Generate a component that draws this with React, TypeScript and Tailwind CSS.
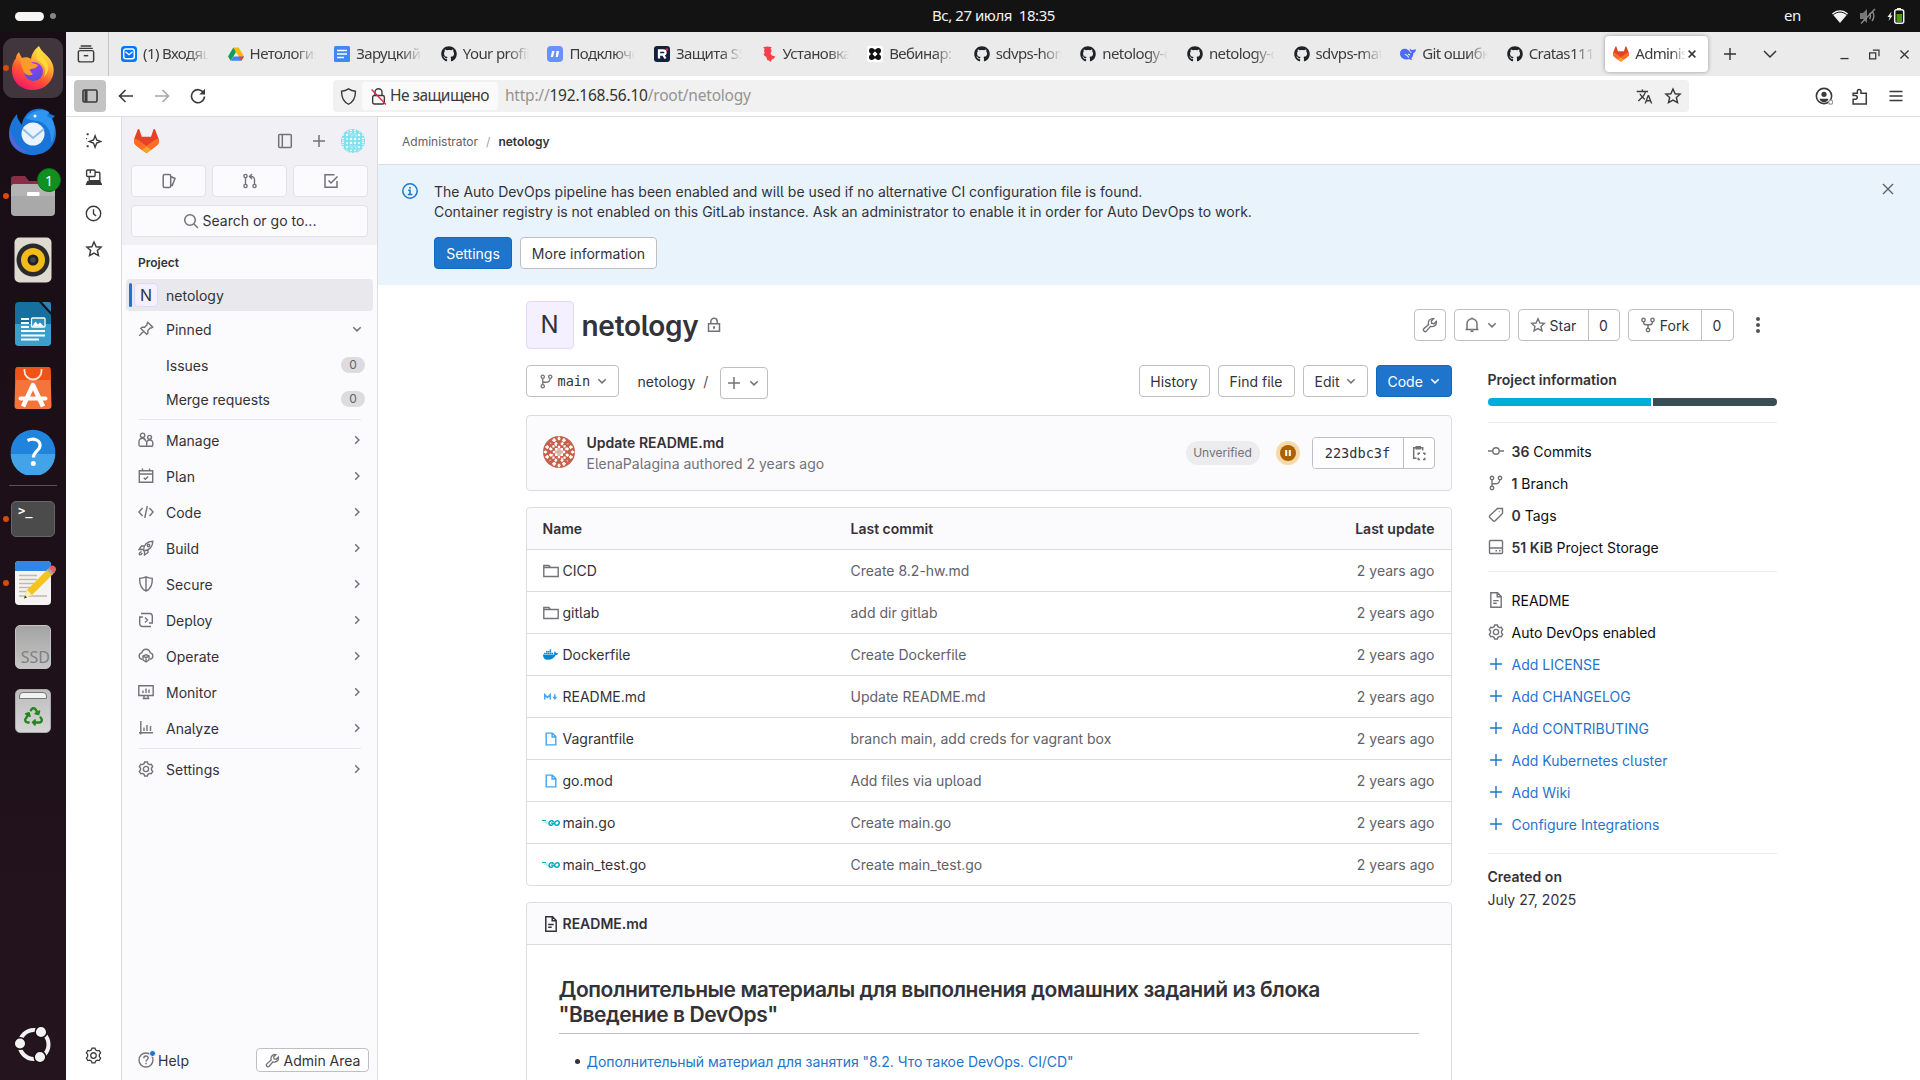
import React from 'react';
import { FaGithub, FaDocker, FaRecycle } from 'react-icons/fa6';
import { MdTranslate } from 'react-icons/md';
import { SiGo } from 'react-icons/si';

type Kids = { children?: React.ReactNode };

function Ico({ d, className = '', size = 16, w = 1.5, children }: Kids & { d?: string; className?: string; size?: number; w?: number }) {
  return (
    <svg width={size} height={size} viewBox="0 0 16 16" fill="none" stroke="currentColor" strokeWidth={w} className={'shrink-0 ' + className}>
      {d && <path d={d} />}
      {children}
    </svg>
  );
}

const P = {
  down: 'M4.300 6.200 8 9.900l3.700-3.700',
  right: 'M6.200 4.300 9.900 8 6.200 11.700',
  plus: 'M8 2v12M2 8h12',
  close: 'M3.5 3.5l9 9M12.5 3.5l-9 9',
  wrench: 'M1.9 11.6 6.6 7.5C5.6 4.4 7.9 1 11.6 1.7L9.3 4l.4 2.3 2.3.4 2.3-2.3c.7 3.700-2.700 6-5.800 5L4.400 14.100a1.770 1.770 0 0 1-2.500-2.500Z',
  branch: 'M4 5v6M4.200 8.800h3.300c2.500 0 4-1 4.200-3.500M4 1.250a1.750 1.750 0 1 0 0 3.500 1.750 1.750 0 0 0 0-3.500ZM4 11.250a1.750 1.750 0 1 0 0 3.500 1.750 1.750 0 0 0 0-3.500ZM12 1.250a1.750 1.750 0 1 0 0 3.500 1.750 1.750 0 0 0 0-3.500Z',
  star: 'M8 1.800 9.900 6l4.400.4-3.300 3 1 4.500L8 11.600l-4 2.300 1-4.500-3.300-3L6.100 6Z',
  gear: 'M6.600 1h2.800l.5 1.700 1.600.9 1.800-.4 1.400 2.400L13.500 7v2l1.200 1.400-1.400 2.400-1.800-.4-1.600.9-.5 1.700H6.600l-.5-1.700-1.600-.9-1.800.4L1.300 10.400 2.500 9V7L1.300 5.600l1.400-2.400 1.800.4 1.600-.9ZM8 5.400a2.600 2.600 0 1 0 0 5.200 2.600 2.600 0 0 0 0-5.200Z',
  doc: 'M3 .8h6.500L13.200 4.500V15.200H2.800V.8ZM9.200.8v4h4M5.200 8.600h5.500M5.200 11.300h3.500',
};

function Tanuki({ className }: { className: string }) {
  return (
    <svg viewBox="0 0 25 24" className={className}>
      <path d="m24.500 9.500-.03-.09L21.080.560a.900.900 0 0 0-1.720.1l-2.300 7.040H7.750L5.450.66a.9.9 0 0 0-1.720-.1L.340 9.410l-.030.090a6.300 6.300 0 0 0 2.090 7.280l5.190 3.890 2.560 1.940 1.560 1.180c.380.290.900.290 1.270 0l1.560-1.180 2.560-1.940 5.220-3.910a6.300 6.300 0 0 0 2.180-7.260Z" fill="#E24329" />
      <path d="m24.500 9.500-.030-.090a11.440 11.440 0 0 0-4.560 2.050l-7.450 5.630 4.740 3.580 5.220-3.910a6.300 6.300 0 0 0 2.080-7.260Z" fill="#FC6D26" />
      <path d="m7.700 20.680 2.560 1.940 1.560 1.180c.380.290.900.290 1.270 0l1.560-1.180 2.560-1.940-4.750-3.590Z" fill="#FCA326" />
      <path d="M5 11.460A11.400 11.400 0 0 0 .440 9.410L.400 9.500a6.300 6.300 0 0 0 2.090 7.280l5.210 3.900 4.750-3.590Z" fill="#FC6D26" />
    </svg>
  );
}

function Identicon({ color, size, id }: { color: string; size: number; id: string }) {
  const cells: React.ReactNode[] = [];
  for (let r = 0; r < 6; r++)
    for (let c = 0; c < 6; c++) {
      const rr = Math.min(r, 5 - r);
      const cc = Math.min(c, 5 - c);
      const x = c * 6;
      const y = r * 6;
      const k = rr * 3 + cc;
      if (k % 4 === 0) cells.push(<path key={x + '-' + y} d={`M${x + 3} ${y + 0.7}l2.300 2.300-2.300 2.300-2.300-2.300Z`} />);
      else if (k % 4 === 1) cells.push(<path key={x + '-' + y} d={`M${x + 1} ${y + 1}h1.500v1.500h-1.500ZM${x + 3.5} ${y + 3.5}h1.700v1.700h-1.700ZM${x + 3.5} ${y + 1}l1.500 0 0 1.500Z`} />);
      else if (k % 4 === 2) cells.push(<path key={x + '-' + y} d={`M${x + 1} ${y + 3}l2-2.500 2 2.500ZM${x + 1} ${y + 5.6}l2-2 2 2Z`} />);
      else cells.push(<path key={x + '-' + y} d={`M${x + 1.7} ${y + 1.7}h2.600v2.600h-2.600Z`} />);
    }
  return (
    <svg width={size} height={size} viewBox="0 0 36 36" className="shrink-0">
      <clipPath id={id}><circle cx="18" cy="18" r="18" /></clipPath>
      <g clipPath={`url(#${id})`}>
        <rect width="36" height="36" fill={color} />
        <g fill="#fff">{cells}</g>
      </g>
    </svg>
  );
}

function AuthorAvatar() {
  const edge = 'M12.500 2l2.500 3-2.500 2-2.500-2ZM18 0l2 3-2 2-2-2ZM23.500 2l2.500 3-2.500 2-2.500-2ZM14.500 6.500l2 2-2 2.500-2-2ZM21.500 6.500l2 2-2 2.500-2-2Z';
  return (
    <svg width="32" height="32" viewBox="0 0 36 36" className="shrink-0">
      <clipPath id="av-author"><circle cx="18" cy="18" r="18" /></clipPath>
      <g clipPath="url(#av-author)">
        <rect width="36" height="36" fill="#c5604c" />
        <g fill="#fff">
          {[0, 90, 180, 270].map((a) => (
            <g key={a} transform={`rotate(${a} 18 18)`}>
              <path d={edge} />
              <path d="M10.500 10.500h2.500v2.500h-2.500ZM13.500 13.500h3v3h-3ZM16.700 11h2.600v2.600h-2.600ZM14 10h1.500v1.500h-1.500ZM7.500 7.500l1.800 0 0 1.800Z" />
            </g>
          ))}
          <path d="M17.400 13v10h1.200V13ZM13 17.400h10v1.200H13Z" />
        </g>
      </g>
    </svg>
  );
}

/* ---------- Desktop ---------- */

function TopBar() {
  return (
    <div className="flex h-8 shrink-0 items-center bg-[#131313] text-[#f2f2f2]">
      <div className="flex w-[924px] items-center pl-[15px]">
        <div className="h-[9px] w-[29px] rounded-full bg-[#f6f5f4]" />
        <div className="ml-1.5 h-1.5 w-1.5 rounded-full bg-[#848484]" />
      </div>
      <div className="-mt-px w-[140px] whitespace-pre pl-2 text-[15px] tracking-[-0.450px]">Вс, 27 июля  18:35</div>
      <div className="ml-auto flex items-center pr-[15px]">
        <span className="-mt-px mr-[31px] text-[15px] tracking-[-0.400px]">en</span>
        <svg width="16" height="16" viewBox="0 0 16 16" className="mr-3"><path d="M0 5.500C4.500 1 11.500 1 16 5.500L8 15Z" fill="#f2f2f2" /><path d="M1.200 6.800c4-3.600 9.600-3.600 13.600 0" stroke="#131313" strokeWidth="1" fill="none" /></svg>
        <svg width="16" height="16" viewBox="0 0 16 16" className="mr-[11px]" fill="none" stroke="#8a8a8a" strokeWidth="1.400"><path d="M0 5h3l4-4v14l-4-4H0Z" fill="#777" stroke="none" /><path d="M9.500 5c1.300 2 1.300 4 0 6M12 3c2.300 3 2.300 7 0 10M1 15.500 15 1" /></svg>
        <svg width="18" height="18" viewBox="0 0 18 16"><path d="M4.500 3.500.5 9h2.200L1.500 13l4-5.500H3.500Z" fill="#f2f2f2" /><rect x="7.700" y="1.800" width="9" height="13.400" rx="2" fill="#131313" stroke="#f2f2f2" strokeWidth="1.500" /><rect x="10" y="0" width="4" height="2" fill="#f2f2f2" /><rect x="9.500" y="6" width="5.500" height="8" fill="#4e9a06" /></svg>
      </div>
    </div>
  );
}

function DockSlot({ children, dot, active }: Kids & { dot?: boolean; active?: boolean }) {
  return (
    <div className="relative flex h-16 shrink-0 items-center justify-center">
      {active && <div className="absolute inset-y-0.5 left-[3px] right-[3px] rounded-[11px] bg-[#40363c]" />}
      {dot && <div className="absolute left-[3px] top-[29px] h-1.5 w-1.5 rounded-full bg-[#d9480f]" />}
      <div className="relative">{children}</div>
    </div>
  );
}

function Dock() {
  return (
    <div className="flex w-[66px] shrink-0 flex-col bg-linear-to-b from-[#190d15] via-[#1d1018] to-[#24141e] pt-1">
      <DockSlot dot active>
        <svg width="44" height="46" viewBox="0 0 44 46">
          <defs>
            <linearGradient id="ff" x1=".8" y1="0" x2=".3" y2="1"><stop offset="0" stopColor="#fff44f" /><stop offset=".35" stopColor="#ffb02e" /><stop offset=".65" stopColor="#ff5634" /><stop offset="1" stopColor="#f5156c" /></linearGradient>
            <linearGradient id="ffp" x1="0" y1="0" x2=".3" y2="1"><stop offset="0" stopColor="#b03af0" /><stop offset="1" stopColor="#5a4de0" /></linearGradient>
          </defs>
          <path d="M28 1c2 5 7 8 10 12 5 6 6 13 3 20-3 7-10 12-19 12C10 45 1 37 1 25c0-6 2-9 4-12 0-2 1-4 3-6 1 3 2 4 3 6 3-1 6-1 9 1 1-6 4-10 8-13Z" fill="url(#ff)" />
          <circle cx="22.500" cy="26.500" r="9.500" fill="url(#ffp)" />
          <path d="M9 14c4-1 9 0 12 4 2 1 5 1 6 2-1 3-5 4-8 4 0 2 1 4 3 5-4 3-9 0-10-4-1-3-2-7-3-11Z" fill="#ff9a2e" />
          <path d="M28 3c0 7 7 10 9 17 1 4-1 9-4 12 4-9-2-15-7-17-1-4 0-9 2-12Z" fill="#ffd83a" />
        </svg>
      </DockSlot>
      <DockSlot>
        <svg width="50" height="48" viewBox="0 0 50 48">
          <path d="M9 6C4 12 1 18 1 26c0 12 10 21 24 21 13 0 23-9 23-22 0-5-2-10-4-14l3-3-5-2C38-1 24-1 18 7c-3 4-4 7-4 10-2-3-5-6-5-11Z" fill="#1975d8" />
          <path d="M18 10c5-7 15-10 23-6l-2 4 5 3c4 7 3 18-1 24 1-12-5-21-14-22-4-1-8-1-11-3Z" fill="#2e96f0" />
          <path d="M3 18c-1 11 5 21 17 26-6 1-16-4-18-14Z" fill="#5a62d8" />
          <circle cx="25" cy="26" r="11.500" fill="#eaf3ff" />
          <path d="m15 21 10 9 11-9" fill="none" stroke="#8fbbe8" strokeWidth="2" />
          <circle cx="27" cy="8" r="1.500" fill="#fff" />
        </svg>
      </DockSlot>
      <DockSlot dot>
        <svg width="46" height="42" viewBox="0 0 46 42">
          <path d="M1 4a3 3 0 0 1 3-3h11l4 5h22a3 3 0 0 1 3 3v12H1Z" fill="#8a2d46" />
          <rect x="1" y="9" width="44" height="32" rx="4" fill="#a9a9a9" />
          <path d="M5 9h36a4 4 0 0 1 4 4v8H1v-8a4 4 0 0 1 4-4Z" fill="#b4b4b4" />
          <rect x="17" y="17" width="12.500" height="4" rx="1" fill="#fff" />
        </svg>
        <div className="absolute -top-[7px] left-[27px] flex h-6 w-6 items-center justify-center rounded-full border border-[#0d6b1c] bg-[#12901f] text-[14px] text-white">1</div>
      </DockSlot>
      <DockSlot>
        <svg width="38" height="46" viewBox="0 0 38 46">
          <rect x="0.500" y="0.500" width="37" height="45" rx="5" fill="#e0dbd0" />
          <circle cx="19" cy="23" r="16.500" fill="#2a2a2c" /><circle cx="19" cy="23" r="12" fill="#f2bb1a" /><circle cx="19" cy="23" r="5.500" fill="#1f1f22" /><circle cx="19" cy="23" r="2.800" fill="#45454a" />
        </svg>
      </DockSlot>
      <DockSlot>
        <svg width="38" height="46" viewBox="0 0 38 46">
          <path d="M5 1h20l12 13v27a4 4 0 0 1-4 4H5a4 4 0 0 1-4-4V5a4 4 0 0 1 4-4Z" fill="#16709f" />
          <path d="M1 23h36v18a4 4 0 0 1-4 4H5a4 4 0 0 1-4-4Z" fill="#3b9fcb" />
          <path d="M28 1h7a2 2 0 0 1 2 2v8Z" fill="#2b86b2" />
          <path d="M7 18h8M7 22h8M7 26h8M7 30h24M7 34.500h24M7 38.500h18" stroke="#fff" strokeWidth="2" />
          <rect x="17.500" y="17" width="13.500" height="9" rx="1" fill="#2e8fbd" stroke="#fff" strokeWidth="1.300" /><path d="m18 25.500 3.500-5 2.500 3 2-2 4 4Z" fill="#fff" />
        </svg>
      </DockSlot>
      <DockSlot>
        <svg width="38" height="44" viewBox="0 0 38 44">
          <path d="M4 1h30a2.500 2.500 0 0 1 2.500 2.500L37.500 40a3 3 0 0 1-3 3h-31a3 3 0 0 1-3-3L1.500 3.500A2.500 2.500 0 0 1 4 1Z" fill="#f4743b" />
          <path d="M4 1h30a2.500 2.500 0 0 1 2.500 2.500L37 14H1L1.500 3.500A2.500 2.500 0 0 1 4 1Z" fill="#ef5316" />
          <path d="M10.500 3v2a8.500 8.500 0 0 0 17 0V3" fill="none" stroke="#fbe3d8" strokeWidth="1.800" />
          <path d="M9 40.500 19 19l10 21.500" fill="none" stroke="#fff" strokeWidth="4.500" strokeLinejoin="round" /><path d="M6.500 32.500h25" stroke="#fff" strokeWidth="4" strokeLinecap="round" />
        </svg>
      </DockSlot>
      <DockSlot>
        <svg width="46" height="46" viewBox="0 0 46 46" className="-mt-px">
          <circle cx="23" cy="23" r="22.300" fill="#2084dc" /><path d="M.7 25a22.300 22.300 0 0 0 44.600 0Z" fill="#43a3e8" />
          <path d="M17.500 11.500c6-3 13-.5 12.500 5.500-.4 5-6.500 5-6.500 11.500" fill="none" stroke="#fff" strokeWidth="3.200" /><circle cx="23.300" cy="34.500" r="2.500" fill="#fff" />
        </svg>
      </DockSlot>
      <div className="mx-[9px] mb-px mt-[1px] h-px shrink-0 bg-[#5a5157]" />
      <DockSlot dot>
        <div className="h-9 w-11 rounded-[5px] border border-[#666] bg-[#4b4b4b] pl-1.5 pt-0.5 font-['DejaVu_Sans_Mono'] text-[12px] font-bold leading-[14px] text-white">&gt;_</div>
      </DockSlot>
      <DockSlot dot>
        <svg width="46" height="46" viewBox="-4 0 46 46">
          <rect x="1" y="1" width="36" height="44" rx="4" fill="#f4f3f1" /><path d="M5 1h28a4 4 0 0 1 4 4v6H1V5a4 4 0 0 1 4-4Z" fill="#3584e4" />
          <path d="M5 15.500h18M5 19.500h18M5 23.500h18M5 27.500h14M5 31.500h9M5 36h28" stroke="#c0bba8" strokeWidth="1.500" />
          <path d="M10 38.500 13 30 34 9l5 5-21 21Z" fill="#f6c21c" /><path d="M10 38.500 13 30l5 5Z" fill="#fbeebb" /><path d="m33 10 3-3 5 5-3 3Z" fill="#a9a4a4" /><path d="m35 8 1.500-2c3-2 7 2 5 5l-1.500 2Z" fill="#ed5b64" /><path d="m10 38.500 1-3 2 2Z" fill="#333" />
        </svg>
      </DockSlot>
      <DockSlot>
        <div className="flex h-11 w-9 items-end justify-end rounded-[5px] border border-[#c4c4c4] bg-linear-to-b from-[#a3a3a3] to-[#c6c6c6] font-['Noto_Sans'] text-[16px] leading-[22px] text-[#808080]">SSD</div>
      </DockSlot>
      <DockSlot>
        <div className="flex h-11 w-9 flex-col items-center rounded-[5px] border border-[#aaa] bg-linear-to-b from-[#bdbdbd] to-[#d6d6d6]">
          <div className="mt-0.5 h-[7px] w-7 rounded-t border border-[#777] bg-[#f2f2f2]" />
          <FaRecycle className="mt-2 h-[19px] w-[19px] text-[#26861f]" />
        </div>
      </DockSlot>
      <div className="mb-[17px] mt-auto flex justify-center">
        <svg width="38" height="38" viewBox="0 0 38 38">
          <circle cx="20" cy="19.500" r="14.500" fill="none" stroke="#f2f2f2" strokeWidth="4" />
          <g fill="#f2f2f2" stroke="#1e1218" strokeWidth="1.500"><circle cx="6" cy="18.500" r="5.800" /><circle cx="27" cy="7" r="5.800" /><circle cx="26" cy="32" r="5.800" /></g>
        </svg>
      </div>
    </div>
  );
}

/* ---------- Browser ---------- */

const GitHubIcon = () => <FaGithub className="h-4 w-4 text-[#1f2328]" />;

const tabs: { t: string; i: React.ReactNode }[] = [
  { t: '(1) Входящие', i: <svg viewBox="0 0 16 16" className="h-4 w-4"><rect width="16" height="16" rx="3.500" fill="#07f" /><rect x="2.700" y="3" width="10.600" height="9.800" rx="2.200" fill="none" stroke="#fff" strokeWidth="1.500" /><path d="m4.500 5.700 3.500 3 3.500-3" fill="none" stroke="#fff" strokeWidth="1.400" /></svg> },
  { t: 'Нетология', i: <svg viewBox="0 0 16 16" className="h-4 w-4"><path d="M5.300 1.500h5.400L16 10.500h-5.300Z" fill="#ffba00" /><path d="M5.300 1.500 8 6.100 2.700 14.800 0 10.500Z" fill="#0f9d58" /><path d="M5.400 10.500H16l-2.700 4.300H2.700Z" fill="#4285f4" /><path d="m10.700 10.500 5.300 0-2.700 4.300Z" fill="#ea4335" /></svg> },
  { t: 'Заруцкий', i: <svg viewBox="0 0 16 16" className="h-4 w-4"><rect width="16" height="16" rx="1.500" fill="#4285f4" /><path d="M3 4.500h10M3 8h10M3 11.500h7" stroke="#fff" strokeWidth="1.700" /></svg> },
  { t: 'Your profile', i: <GitHubIcon /> },
  { t: 'Подключение', i: <svg viewBox="0 0 16 16" className="h-4 w-4"><rect width="16" height="16" rx="4" fill="#6691ff" /><path d="M5 5h2.600L6 11H3.800ZM9.500 5h2.600l-1.200 6H8.800Z" fill="#fff" /></svg> },
  { t: 'Защита SSH', i: <svg viewBox="0 0 16 16" className="h-4 w-4"><rect width="16" height="16" rx="3" fill="#14213d" /><path d="M5 12.500V4.500h4.500a2 2 0 0 1 0 4H5m4 0 2.500 4" fill="none" stroke="#fff" strokeWidth="2.300" /><circle cx="13" cy="3.500" r="1.300" fill="#f0243c" /></svg> },
  { t: 'Установка', i: <svg viewBox="0 0 16 16" className="h-4 w-4"><path d="M2 1.500C5 .2 8 .5 11 1.200l-1.500 1C11 4 10.500 6 9.500 7.500L11 9.500l3 .8c0 1.500-1.500 3-3 3L9.500 16 8 14.500l-1.500-.3L5 10.500 3.500 10 2.500 7.500l1.500-.3-1-2 .5-2.500Z" fill="#f04248" /></svg> },
  { t: 'Вебинар: ', i: <svg viewBox="0 0 16 16" className="h-4 w-4"><rect width="16" height="16" rx="2" fill="#fff" /><g fill="none" stroke="#111" strokeWidth="2.200"><circle cx="4.700" cy="4.700" r="1.600" /><circle cx="11.300" cy="4.700" r="1.600" /><circle cx="4.700" cy="11.300" r="1.600" /><circle cx="11.300" cy="11.300" r="1.600" /><path d="M4.700 4.700h6.600v6.600H4.700Z" /></g></svg> },
  { t: 'sdvps-home', i: <GitHubIcon /> },
  { t: 'netology-de', i: <GitHubIcon /> },
  { t: 'netology-de', i: <GitHubIcon /> },
  { t: 'sdvps-mate', i: <GitHubIcon /> },
  { t: 'Git ошибка', i: <svg viewBox="0 0 16 16" className="h-4 w-4"><path d="M0 7.500C0 4 2.500 2.300 5.500 2.800 7.500 3 9 4.500 10.300 6.500c.5.300 1 .3 1.500 0-1.500-.7-2.300-2-2-4 1 1.200 2 1.700 3 1.500 1.200-.2 2.200-.8 3.200-.7-.2 2-.8 3.200-2.600 4-.1 2.500-.9 4-2.200 5.200.5.500 1 .8 1.500 1-1.500.8-3 0-3.700-.5C4.500 14.500 0 12 0 7.500Z" fill="#4d6bfe" /><path d="M4.800 8.200c2 .5 3 1.500 4 3.300M8 8l2 1.300" stroke="#ebebeb" strokeWidth="1.100" fill="none" /></svg> },
  { t: 'Cratas1113', i: <GitHubIcon /> },
];

function TabStrip() {
  return (
    <div className="flex h-11 shrink-0 items-center bg-[#ebebeb] text-[15px] text-[#3d3d3d]">
      <div className="flex h-full w-[43px] items-center justify-center border-r border-[#c2c2c2] pr-0.5">
        <Ico size={18} w={1.300} className="text-[#3a3a3a]"><path d="M3.300.8h9.400M2 3h12" /><rect x="1.200" y="5" width="13.600" height="10" rx="1.500" /><path d="M6 9.500h4" /></Ico>
      </div>
      <div className="flex pl-1">
        {tabs.map((t, i) => (
          <div key={i} className="flex w-[106.600px] items-center pl-2">
            <span className="shrink-0">{t.i}</span>
            <span className="-mt-px ml-1.5 w-[66px] overflow-hidden whitespace-nowrap tracking-[-0.600px] [mask-image:linear-gradient(to_right,black_68%,transparent)]">{t.t}</span>
          </div>
        ))}
        <div className="-my-[7px] flex h-9 w-[103px] items-center rounded bg-white pl-2 shadow-[0_0_4px_rgba(0,0,0,0.350)]">
          <Tanuki className="h-4 w-4 shrink-0" />
          <span className="-mt-px ml-1.5 w-[51px] overflow-hidden whitespace-nowrap tracking-[-0.700px] [mask-image:linear-gradient(to_right,black_72%,transparent)]">Administrator</span>
          <Ico size={12} w={1.900} d={P.close} className="text-[#333]" />
        </div>
      </div>
      <Ico size={16} w={1.400} d={P.plus} className="ml-[14px] text-[#333]" />
      <Ico size={16} w={1.500} d="M2 5l6 6 6-6" className="ml-6 text-[#333]" />
      <div className="ml-auto flex items-center gap-[17px] pr-[9px] text-[#333]">
        <Ico size={13} w={1.600} d="M3 13h10" />
        <Ico size={13} w={1.500}><path d="M2 6h7.500v7.500H2ZM6 2.500h7.500V10" /></Ico>
        <Ico size={13} w={1.600} d="M3 3l10 10M13 3L3 13" />
      </div>
    </div>
  );
}

function Toolbar() {
  return (
    <div className="flex h-[41px] shrink-0 items-start border-b border-[#dedede] bg-white pt-1 text-[#3a3a3a]">
      <div className="ml-2 flex h-8 w-8 items-center justify-center rounded bg-[#c4c4c4]">
        <Ico size={16} w={1.600}><rect x="1" y="2" width="14" height="12" rx="1.500" /><path d="M4 2v12" strokeWidth="3" /></Ico>
      </div>
      <div className="flex h-8 items-center">
        <Ico size={16} w={1.600} d="M15 8H1.500M7.500 2 1.500 8l6 6" className="ml-3" />
        <Ico size={16} w={1.600} d="M1 8h13.500M8.500 2l6 6-6 6" className="ml-5 text-[#a8a8a8]" />
        <Ico size={16} w={1.600} className="-mt-px ml-5"><path d="M13.700 5A6.500 6.500 0 1 0 14.500 8.500" /><path d="M15 .8v5.700H9.300Z" fill="currentColor" stroke="none" /></Ico>
      </div>
      <div className="ml-[127px] flex h-8 w-[1356px] items-center rounded bg-[#f1f1f1] text-[15.500px]">
        <Ico size={17} w={1.300} d="M8 .8c2 1.300 4 2 6.500 2.200C14.700 9 12.500 13 8 15.300 3.500 13 1.300 9 1.500 3 4 2.800 6 2.100 8 .8Z" className="ml-[7px]" />
        <div className="ml-[5px] flex h-7 w-[136px] items-center rounded bg-[#fafafa]">
          <Ico size={17} w={1.300} className="ml-2"><rect x="2.500" y="7" width="11" height="8" rx="1.500" /><path d="M4.700 7V4a3.300 3.300 0 0 1 6.600 0v3" /><path d="m1.500 1.500 13.500 14" stroke="#e8234f" /></Ico>
          <span className="ml-[3px] whitespace-nowrap tracking-[-0.550px]">Не защищено</span>
        </div>
        <span className="ml-[7px] whitespace-nowrap tracking-[-0.220px] text-[#949494]">http://<span className="text-[#333]">192.168.56.10</span>/root/netology</span>
        <MdTranslate className="ml-auto h-[17px] w-[17px]" />
        <Ico size={18} w={1.300} d={P.star} className="ml-[11px] mr-[7px]" />
      </div>
      <div className="ml-auto mr-4 flex h-8 items-center">
        <Ico size={18} w={1.400} className="mr-[18px]"><circle cx="8" cy="8" r="6.800" /><circle cx="8" cy="6.500" r="2.300" fill="currentColor" stroke="none" /><path d="M4 10.500h8c-.5 2-2 3-4 3s-3.500-1-4-3Z" fill="currentColor" stroke="none" /><circle cx="14" cy="13.500" r="1.800" stroke="#999" fill="#fff" strokeWidth="1" /></Ico>
        <Ico size={17} w={1.400} className="mr-5" d="M2 15V10.500h2.200a1.600 1.600 0 0 0 0-3.400H2V5h4V3a1.700 1.700 0 0 1 3.400 0v2h5V15Z" />
        <Ico size={16} w={1.400} d="M1.500 3.500h13M1.500 8h13M1.500 12.500h13" />
      </div>
    </div>
  );
}

function BrowserRail() {
  return (
    <div className="flex w-[55px] shrink-0 flex-col items-center gap-[19px] bg-white pt-4 text-[#3a3a3a]">
      <Ico size={17} w={1.300}><path d="M9.500 2.500 11 6.500l4 1.500-4 1.500-1.500 4L8 9.500 4 8l4-1.500Z" /><path d="M1.500 1.200h2M2.500.2v2M1.500 12.500h2M2.500 11.500v2M1 5.300h1" /></Ico>
      <Ico size={17} w={1.300}><rect x="1.500" y="1" width="8" height="6" rx="1" /><path d="M9.500 3H13a1 1 0 0 1 1 1v7H4V7" /><path d="M2.500 12h11.500l1.500 2.500h-14Z" fill="currentColor" /><path d="M5 1v3" /></Ico>
      <Ico size={17} w={1.300}><circle cx="8" cy="8" r="6.800" /><path d="M8 4v4.300l2.500 2" /></Ico>
      <Ico size={18} w={1.300} d={P.star} className="-mt-px" />
      <Ico size={17} w={1.200} d={P.gear} className="mb-4 mt-auto" />
    </div>
  );
}

/* ---------- GitLab ---------- */

const navIcons: Record<string, React.ReactNode> = {
  Manage: <><circle cx="4.600" cy="3.300" r="2.200" /><circle cx="11.600" cy="5.300" r="1.900" /><path d="M8 14.200H2.500a1.500 1.500 0 0 1-1.500-1.500V9.500a3.300 3.300 0 0 1 6.600 0M8.700 14.200h4.800a1.200 1.200 0 0 0 1.300-1.200v-2.200a2.800 2.800 0 0 0-3-2.800c-1.800 0-3.100 1.200-3.100 2.800v3.400Z" /></>,
  Plan: <><path d="M1.300 2.700h13.400v11.600H1.300ZM1.300 6h13.400M4.500.5v2.500M11.500.5v2.500M5.800 9.700l1.500 1.500 2.800-2.700" /></>,
  Code: <><path d="M4.500 4 .900 8l3.600 4M11.500 4l3.600 4-3.600 4M9.300 2 6.700 14" /></>,
  Build: <><path d="M5.500 10.500C5.500 5 9 1.200 14.800 1.200c0 5.500-3.500 9.300-9 9.500ZM6 6H3.500L1 9.500h4M10 10v2.500L6.500 15v-4M1.200 14.800c0-2 .8-3 2.500-3.200M1.200 14.800c1.500.2 2.500-.4 3-1.800" /><circle cx="10.500" cy="5.500" r="1.200" /></>,
  Secure: <path d="M8 .9c2 1 4 1.400 6.300 1.500C14.500 8.500 12.500 13 8 15 3.500 13 1.500 8.500 1.700 2.400 4 2.300 6 1.900 8 .9ZM8 1v14" />,
  Deploy: <path d="M3 1.500h8.500A2.800 2.800 0 0 1 14.300 4.300V11H11M13 14.500H4.500a2.800 2.800 0 0 1-2.800-2.800V5H5M7 5.500 9.500 8 7 10.500" />,
  Operate: <><path d="M4 11.200a3.200 3.200 0 0 1-.3-6.300C4.500 2.600 6 1.200 8 1.200s3.600 1.400 4.300 3.700a3.200 3.200 0 0 1-.3 6.300" /><path d="M8 6.700 11 8v4l-3 2-3-2V8ZM5.200 8.200 8 9.700l2.800-1.500M8 9.700V13.500" /></>,
  Monitor: <path d="M.8 1.800h14.400v9.700H.8ZM4.700 14.500h6.600M6 11.500v3M10 11.500v3M5 6.500V9M8 4.500V9M11 5.500V9" />,
  Analyze: <path d="M2.800 1v13.500M1 12.700h14M6 7.500V11M9 5V11M12.500 6V11" />,
  Settings: <path d={P.gear} />,
};

function NavRow({ name }: { name: string }) {
  return (
    <div className="flex h-9 items-center pl-4 pr-3">
      <Ico w={1.400} className="text-[#737278]">{navIcons[name]}</Ico>
      <span className="ml-3">{name}</span>
      <Ico d={P.right} className="ml-auto text-[#737278]" />
    </div>
  );
}

function Sidebar() {
  const btn = 'flex h-8 flex-1 items-center justify-center rounded border border-[#e3e2e7] bg-[#fbfafd]';
  return (
    <div className="flex w-[257px] shrink-0 flex-col border-x border-[#dcdcde] bg-[#fbfafd] text-[14px] text-[#333238]">
      <div className="h-32 shrink-0 bg-[#f1f0f4] text-[#737278]">
        <div className="flex h-12 items-center pl-3 pr-3">
          <Tanuki className="h-6 w-[25px]" />
          <Ico className="ml-auto"><rect x="1.700" y="1.500" width="12.600" height="13" rx="1" /><path d="M5.300 1.500v13" /></Ico>
          <Ico d={P.plus} className="ml-[18px] mr-[14px]" />
          <Identicon color="#7fe0ee" size={24} id="av-user" />
        </div>
        <div className="flex gap-1.5 px-[9px]">
          <div className={btn}><Ico><rect x="2.200" y="1.500" width="7.500" height="13" rx="1.500" /><path d="M9.700 3.500 14 5.500l-2.800 7-1.500-.5" /></Ico></div>
          <div className={btn}><Ico w={1.400}><circle cx="3.500" cy="3" r="1.600" /><circle cx="3.500" cy="13" r="1.600" /><circle cx="12.500" cy="13" r="1.600" /><path d="M3.500 4.600v6.800M12.500 11.400V6.500a3 3 0 0 0-3-3H8M10 1 7.500 3.500 10 6" /></Ico></div>
          <div className={btn}><Ico><path d="M14 8v6.200H2V1.800h9.500M5.500 7.500 8 10l6.500-6.500" /></Ico></div>
        </div>
        <div className="mx-[9px] mt-2 flex h-8 items-center justify-center rounded border border-[#e3e2e7] bg-[#fbfafd] pb-px text-[#333238]">
          <Ico className="mr-1 text-[#737278]"><circle cx="7" cy="7" r="5.300" /><path d="m11 11 4 4" /></Ico>Search or go to...
        </div>
      </div>
      <div className="flex h-[34px] shrink-0 items-center pl-4 pt-0.5 text-[12px] font-semibold">Project</div>
      <div className="mx-1 flex h-8 shrink-0 items-center rounded bg-[#e9e8ed] pl-[3px]">
        <div className="h-6 w-[3px] rounded-full bg-[#1f75cb]" />
        <div className="ml-[2px] flex h-6 w-6 items-center justify-center rounded border border-[#e1d8f9] bg-[#f4f0ff] text-[16px]">N</div>
        <span className="ml-[8px]">netology</span>
      </div>
      <div className="flex h-9 items-center pl-4 pr-3">
        <Ico w={1.400} className="text-[#737278]"><path d="M9.800 1.300 14.700 6.200l-1.500.8-1 0-2.400 2.500.2 2.500-1.300 1.300L2.800 7.400l1.300-1.300 2.500.2L9 3.900V2.600ZM5.700 10.300l-4.500 4.500" /></Ico>
        <span className="ml-3">Pinned</span>
        <Ico d={P.down} className="ml-auto text-[#737278]" />
      </div>
      {['Issues', 'Merge requests'].map((n) => (
        <div key={n} className="relative top-px flex h-[34px] items-center pl-11 pr-3">
          <span>{n}</span>
          <span className="ml-auto h-4 w-6 rounded-full bg-[#dcdcde] text-center text-[12px] leading-4 text-[#626168]">0</span>
        </div>
      ))}
      <div className="mx-4 mb-[2px] mt-1 h-px bg-[#e7e6ea]" />
      {['Manage', 'Plan', 'Code', 'Build', 'Secure', 'Deploy', 'Operate', 'Monitor', 'Analyze'].map((n) => <NavRow key={n} name={n} />)}
      <div className="mx-4 mb-[2px] mt-[2px] h-px bg-[#e7e6ea]" />
      <NavRow name="Settings" />
      <div className="mb-2 mt-auto flex h-6 items-center pl-4 pr-2">
        <div className="relative text-[#737278]">
          <Ico w={1.400}><circle cx="8" cy="8" r="7" /><path d="M5.800 6.300c0-3 4.400-3 4.400-.2C10.200 7.700 8 7.700 8 9.500M8 10.700v1.500" /></Ico>
          <div className="absolute -right-0.5 -top-0.5 h-[7px] w-[7px] rounded-full border border-[#fbfafd] bg-[#1f75cb]" />
        </div>
        <span className="ml-1">Help</span>
        <div className="ml-auto flex h-6 w-[113px] items-center justify-center rounded border border-[#bfbfc3] bg-white"><Ico d={P.wrench} w={1.400} size={15} className="mr-[4px] text-[#737278]" />Admin Area</div>
      </div>
    </div>
  );
}

function Btn({ children, className = '' }: Kids & { className?: string }) {
  return <div className={'flex h-8 shrink-0 items-center rounded border border-[#bfbfc3] bg-white ' + className}>{children}</div>;
}

const FileIcon = () => <Ico size={14} w={1.600} className="ml-px text-[#42a5f5]"><path d="M3.500 1.300h6l4 4v9.400H2.500V1.300ZM9.200 1.500v4.200h4" /></Ico>;
const FolderIcon = () => <Ico w={1.400} className="text-[#737278]"><path d="M.8 13.500V2.500h5l1.700 2h7.700v9ZM.8 4.500h7" /></Ico>;
const GoIcon = () => <span className="-ml-px flex w-[18px] items-center"><span className="-mr-0.5 -mt-1 h-[1.500px] w-1 shrink-0 bg-[#00acc1]" /><SiGo className="h-4 w-4 shrink-0 text-[#00acc1]" /></span>;

const files: [React.ReactNode, string, string][] = [
  [<FolderIcon />, 'CICD', 'Create 8.2-hw.md'],
  [<FolderIcon />, 'gitlab', 'add dir gitlab'],
  [<FaDocker className="h-[15px] w-[15px] text-[#0288d1]" />, 'Dockerfile', 'Create Dockerfile'],
  [<svg viewBox="0 0 16 16" className="h-4 w-4"><path d="M1.800 10.500V5.700L4.500 8.500l2.700-2.800v4.800M11.800 5.200v4" stroke="#42a5f5" strokeWidth="1.500" fill="none" /><path d="M9.300 7.800h5l-2.500 3.200Z" fill="#42a5f5" /></svg>, 'README.md', 'Update README.md'],
  [<FileIcon />, 'Vagrantfile', 'branch main, add creds for vagrant box'],
  [<FileIcon />, 'go.mod', 'Add files via upload'],
  [<GoIcon />, 'main.go', 'Create main.go'],
  [<GoIcon />, 'main_test.go', 'Create main_test.go'],
];

function LeftColumn() {
  return (
    <div className="w-[926px] shrink-0">
      <div className="flex h-8 items-center">
        <Btn className="w-[93px] pl-3 font-['DejaVu_Sans_Mono'] text-[13.600px]"><Ico d={P.branch} w={1.400} size={15} className="text-[#737278]" /><span className="ml-1">main</span><Ico d={P.down} className="ml-1 text-[#737278]" /></Btn>
        <span className="ml-[19px]">netology</span><span className="ml-[8px] text-[#535158]">/</span>
        <Btn className="relative top-0.5 ml-[12px] w-12 justify-center gap-1 text-[#737278]"><Ico d={P.plus} size={16} /><Ico d={P.down} /></Btn>
        <div className="ml-auto flex gap-2">
          <Btn className="w-[71px] justify-center">History</Btn>
          <Btn className="w-[77px] justify-center">Find file</Btn>
          <Btn className="w-[65px] pl-[11px]">Edit<Ico d={P.down} className="ml-1 text-[#737278]" /></Btn>
          <div className="flex h-8 w-[76px] items-center rounded border border-[#1068bf] bg-[#1f75cb] pl-[11px] text-white">Code<Ico d={P.down} className="ml-1" /></div>
        </div>
      </div>
      <div className="mt-[18px] flex h-[76px] items-center rounded border border-[#dcdcde] bg-[#fbfafd] pl-4 pr-4">
        <div className="-mt-0.5"><AuthorAvatar /></div>
        <div className="ml-3 leading-[21px]">
          <div className="font-semibold">Update README.md</div>
          <div className="text-[#737278]">ElenaPalagina authored 2 years ago</div>
        </div>
        <div className="ml-auto mr-4 flex h-6 w-[74px] items-center justify-center rounded-full bg-[#ececef] text-[12px] text-[#737278]">Unverified</div>
        <div className="mr-3 flex h-6 w-6 items-center justify-center rounded-full bg-[#f5d9a8]">
          <svg width="16" height="16" viewBox="0 0 16 16"><circle cx="8" cy="8" r="8" fill="#ab6100" /><path d="M6.200 5v6M9.800 5v6" stroke="#fff" strokeWidth="2" /></svg>
        </div>
        <Btn className="w-[123px] overflow-hidden">
          <span className="flex h-full w-[91px] items-center justify-center border-r border-[#bfbfc3] bg-[#fdfcfe] font-['DejaVu_Sans_Mono'] text-[13.600px]">223dbc3f</span>
          <span className="flex flex-1 justify-center text-[#737278]"><Ico><path d="M5.500 13.200H2.700V2.800h9v2.700M5.200 3.800V1.700h4v2.100Z" /><path d="M7.200 10V8.200H9M12 8.200h1.800V10M13.800 12.800v1.700H12M9 14.500H7.200v-1.700" /></Ico></span>
        </Btn>
      </div>
      <div className="mt-4 rounded border border-[#dcdcde] bg-white">
        <div className="flex h-[41px] items-center rounded-t bg-[#fbfafd] px-4 font-semibold">
          <span className="w-[308px]">Name</span><span>Last commit</span><span className="ml-auto">Last update</span>
        </div>
        {files.map(([ic, n, c]) => (
          <div key={n} className="flex h-[42px] items-center border-t border-[#dcdcde] px-4">
            <span className="flex w-[308px] items-center"><span className="mr-1 w-4">{ic}</span>{n}</span>
            <span className="text-[#626168]">{c}</span>
            <span className="ml-auto text-[#626168]">2 years ago</span>
          </div>
        ))}
      </div>
      <div className="mt-4 h-[300px] rounded border border-[#dcdcde]">
        <div className="flex h-[42px] items-center rounded-t border-b border-[#dcdcde] bg-[#fbfafd] pl-4 font-semibold"><Ico d={P.doc} className="mr-1" />README.md</div>
        <div className="px-8 pt-8">
          <h2 className="border-b border-[#bfbfc3] pb-[6px] text-[21px] font-semibold leading-[25px] tracking-[-0.430px]">Дополнительные материалы для выполнения домашних заданий из блока<br />"Введение в DevOps"</h2>
          <div className="mt-[17px] flex items-center pl-4"><span className="mr-[7px] h-[5px] w-[5px] rounded-full bg-[#333238]" /><span className="tracking-[-0.055px] text-[#1f75cb]">Дополнительный материал для занятия "8.2. Что такое DevOps. CI/CD"</span></div>
        </div>
      </div>
    </div>
  );
}

function InfoRow({ icon, children, blue }: Kids & { icon: React.ReactNode; blue?: boolean }) {
  return <div className={'flex h-8 items-center ' + (blue ? 'text-[#1f75cb]' : 'text-[#0c0c0f]')}><Ico w={1.400} className={'mr-2 -mt-px ' + (blue ? '' : 'text-[#737278]')}>{icon}</Ico><span>{children}</span></div>;
}

function RightColumn() {
  const b = 'font-semibold text-[#333238]';
  return (
    <div className="ml-9 w-[289px]">
      <div className="mt-[5px] h-5 font-semibold leading-5">Project information</div>
      <div className="mt-2 flex h-2 gap-0.5 overflow-hidden rounded-full"><div className="w-[163px] bg-[#00add8]" /><div className="flex-1 bg-[#384d54]" /></div>
      <div className="mb-[12px] mt-4 h-px bg-[#ececef]" />
      <InfoRow icon={<><circle cx="8" cy="8" r="3.200" /><path d="M0 8h4.800M11.200 8H16" /></>}><span className={b}>36</span> Commits</InfoRow>
      <InfoRow icon={<path d={P.branch} />}><span className={b}>1</span> Branch</InfoRow>
      <InfoRow icon={<><path d="M9.500 1.500h5v5l-7.300 7.300a1.500 1.500 0 0 1-2.100 0L1.900 10.600a1.500 1.500 0 0 1 0-2.100Z" /><path d="M11.300 4.200v1" strokeWidth="1" /></>}><span className={b}>0</span> Tags</InfoRow>
      <InfoRow icon={<><rect x="1.500" y="1.500" width="13" height="13" rx="1" /><path d="M1.500 9h13M7.500 11.700H9M11 11.700h1.500" /></>}><span className={b}>51 KiB</span> Project Storage</InfoRow>
      <div className="mb-[12px] mt-[8px] h-px bg-[#ececef]" />
      <InfoRow icon={<path d={P.doc} />}>README</InfoRow>
      <InfoRow icon={<path d={P.gear} />}>Auto DevOps enabled</InfoRow>
      {['Add LICENSE', 'Add CHANGELOG', 'Add CONTRIBUTING', 'Add Kubernetes cluster', 'Add Wiki', 'Configure Integrations'].map((t) => (
        <InfoRow key={t} blue icon={<path d={P.plus} />}>{t}</InfoRow>
      ))}
      <div className="mt-[13px] h-px bg-[#ececef]" />
      <div className="mt-[11px] leading-[23px]"><div className="font-semibold">Created on</div><div>July 27, 2025</div></div>
    </div>
  );
}

function Main() {
  return (
    <div className="min-w-0 flex-1 bg-white text-[14px] text-[#333238]">
      <div className="flex h-12 items-center border-b border-[#dcdcde] pl-6 pt-0.5 text-[12px]">
        <span className="text-[#626168]">Administrator</span><span className="mx-2 text-[#a4a3a8]">/</span><span className="font-semibold">netology</span>
      </div>
      <div className="flex h-[120px] bg-[#e9f3fc] pl-6">
        <Ico className="mt-[18px] text-[#1f75cb]"><circle cx="8" cy="8" r="7.200" /><path d="M6.200 7.200H8v4.300M5.800 11.500h4.500" /><path d="M8 4v1.500" strokeWidth="1.800" /></Ico>
        <div className="ml-4 pt-[17px] leading-5">
          <div>The Auto DevOps pipeline has been enabled and will be used if no alternative CI configuration file is found.</div>
          <div>Container registry is not enabled on this GitLab instance. Ask an administrator to enable it in order for Auto DevOps to work.</div>
          <div className="mt-[15px] flex gap-2">
            <div className="flex h-8 w-[78px] items-center justify-center rounded border border-[#1068bf] bg-[#1f75cb] pt-px text-white">Settings</div>
            <Btn className="w-[137px] justify-center pt-px">More information</Btn>
          </div>
        </div>
        <Ico d="M3 3l10 10M13 3L3 13" size={16} w={1.400} className="ml-auto mr-6 mt-4 text-[#626168]" />
      </div>
      <div className="ml-[147.500px] w-[1251px]">
        <div className="flex h-20 items-center">
          <div className="flex h-12 w-12 items-center justify-center rounded border border-[#e1d8f9] bg-[#f4f0ff] text-[24px]">N</div>
          <span className="ml-2 pt-0.5 text-[28px] font-semibold tracking-[-0.280px]">netology</span>
          <Ico className="ml-2 text-[#737278]"><path d="M2.500 6.800h11v7.400h-11ZM4.800 6.800V4.500a3.200 3.200 0 0 1 6.400 0v2.300" /><path d="M8 9.300v2.500" strokeWidth="2" /></Ico>
          <div className="ml-auto mr-[11px] flex items-center gap-2">
            <Btn className="w-8 justify-center"><Ico d={P.wrench} w={1.400} className="text-[#737278]" /></Btn>
            <Btn className="w-14 justify-center gap-1 text-[#737278]"><Ico><path d="M1.500 12.500h13M3 12V6.800a5 5 0 0 1 10 0V12M6.500 14.300h3M8 .5v1.500" /></Ico><Ico d={P.down} /></Btn>
            <Btn className="w-[102px]"><span className="flex h-full w-[70px] items-center justify-center border-r border-[#bfbfc3]"><Ico d={P.star} w={1.400} className="mr-1 text-[#737278]" />Star</span><span className="flex-1 text-center">0</span></Btn>
            <Btn className="w-[106px]"><span className="flex h-full w-[73px] items-center justify-center border-r border-[#bfbfc3]"><Ico w={1.400} className="mr-1 text-[#737278]"><circle cx="3.500" cy="3" r="1.700" /><circle cx="12.500" cy="3" r="1.700" /><circle cx="8" cy="13" r="1.700" /><path d="M3.500 4.700c0 2 1 3 2.500 3h4c1.500 0 2.500-1 2.500-3M8 7.700v3.600" /></Ico>Fork</span><span className="flex-1 text-center">0</span></Btn>
            <svg width="16" height="16" viewBox="0 0 16 16" className="ml-2 fill-[#535158]"><circle cx="8" cy="2" r="2" /><circle cx="8" cy="8" r="2" /><circle cx="8" cy="14" r="2" /></svg>
          </div>
        </div>
        <div className="flex"><LeftColumn /><RightColumn /></div>
      </div>
    </div>
  );
}

export default function App() {
  return (
    <div className="flex h-[1080px] w-[1920px] flex-col overflow-hidden bg-white font-['Noto_Sans',sans-serif]">
      <TopBar />
      <div className="flex min-h-0 flex-1">
        <Dock />
        <div className="flex min-w-0 flex-1 flex-col">
          <TabStrip />
          <Toolbar />
          <div className="flex min-h-0 flex-1 overflow-hidden">
            <BrowserRail />
            <div className="flex min-w-0 flex-1 font-['Inter',sans-serif] [font-feature-settings:'cv05']">
              <Sidebar />
              <Main />
            </div>
          </div>
        </div>
      </div>
    </div>
  );
}
